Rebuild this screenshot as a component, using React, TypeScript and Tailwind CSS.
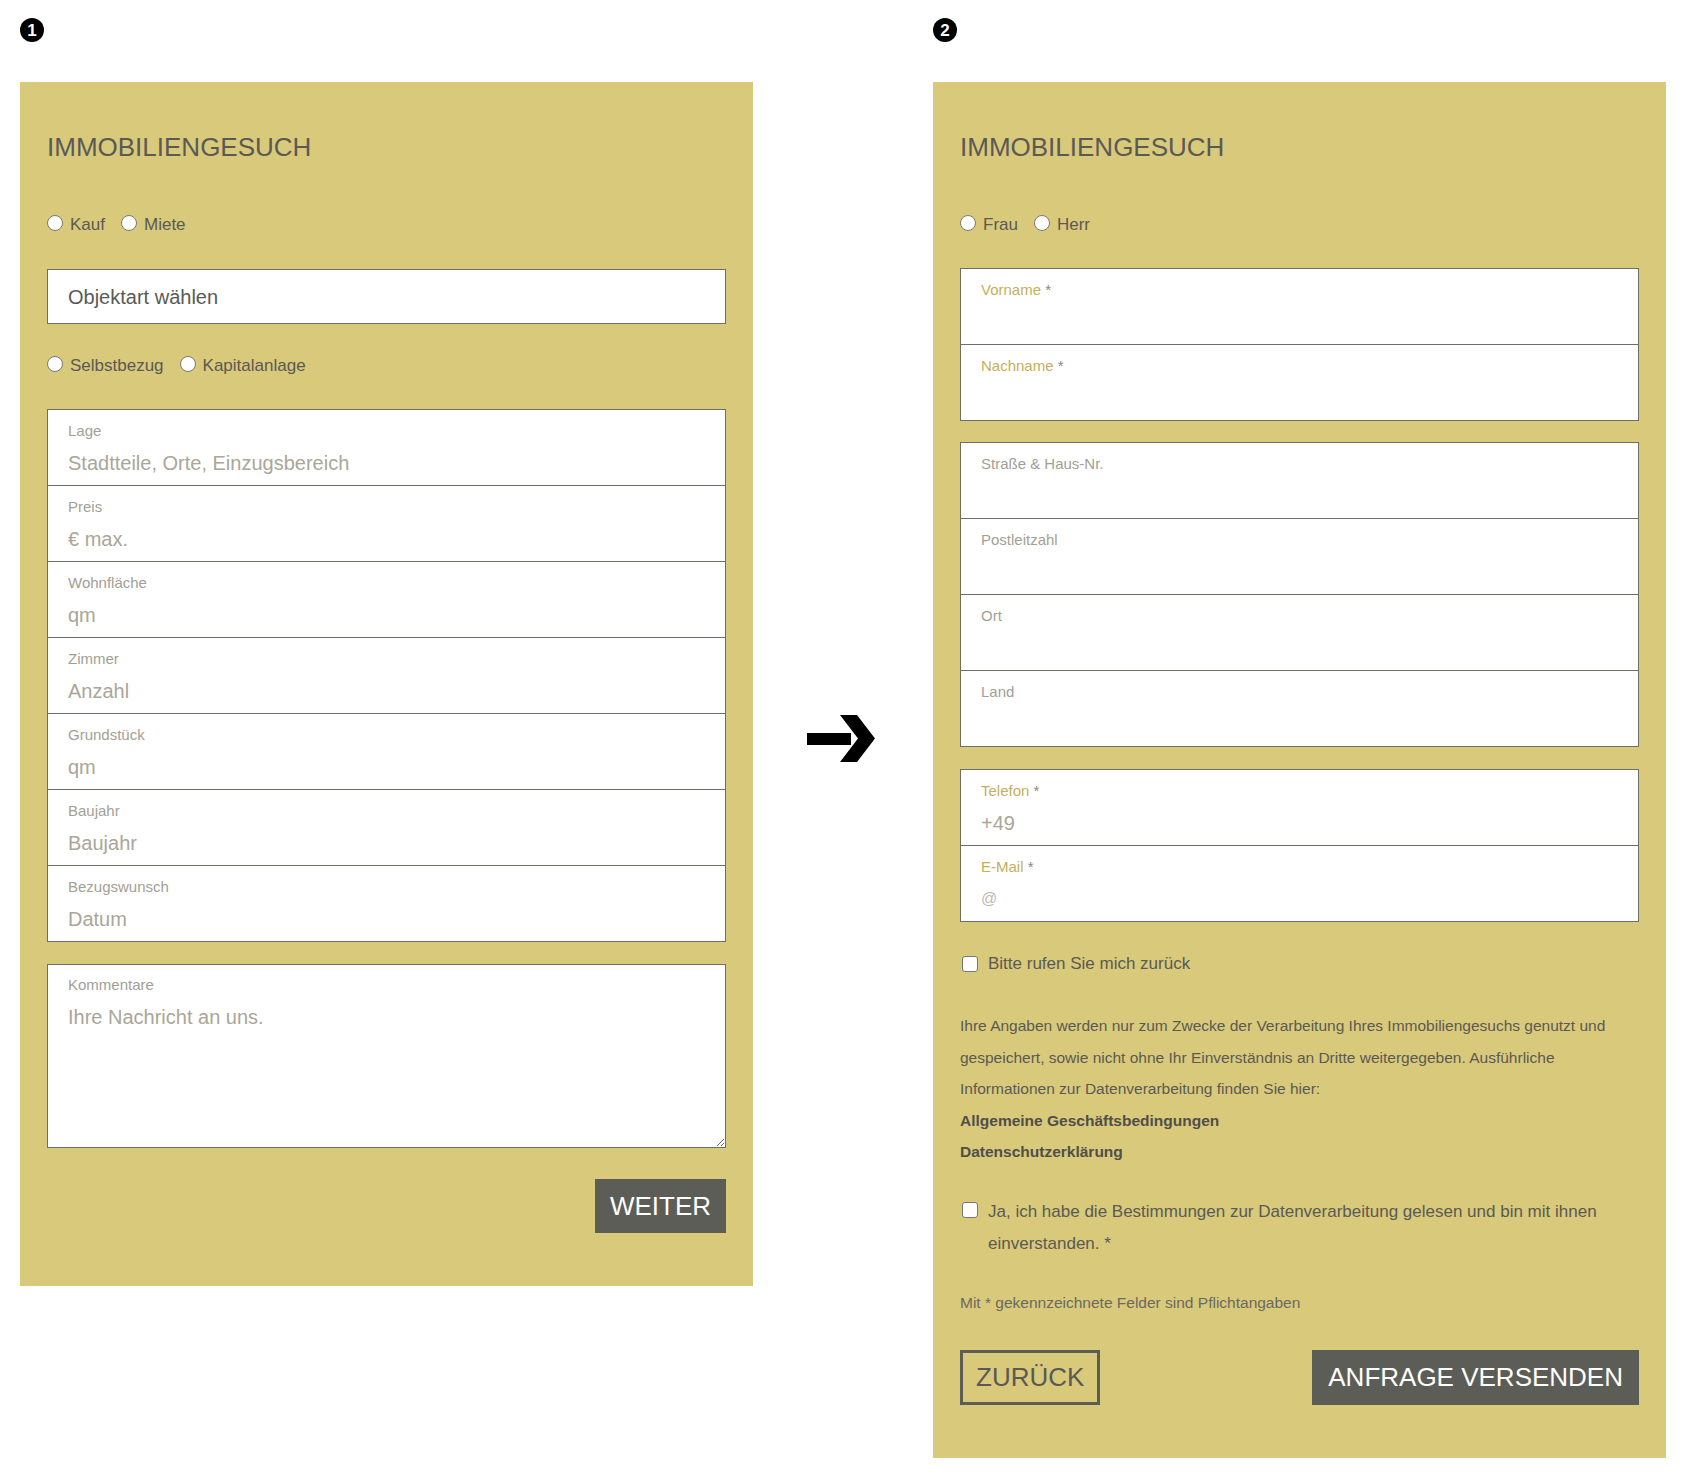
import React from 'react';

const font = "font-['Liberation_Sans',Arial,sans-serif]";

type FieldProps = {
  label: string;
  required?: boolean;
  placeholder?: string;
  small?: boolean;
};

function Field({ label, required, placeholder, small }: FieldProps) {
  return (
    <div className="px-5 pt-[11px] pb-[9px] border-t border-[#6e6e69] first:border-t-0">
      <label className={`block text-[15px] leading-[20px] ${required ? 'text-[#c4b05a]' : 'text-[#a29f95]'}`}>
        {label}
        {required && <span className="text-[#8a8780]"> *</span>}
      </label>
      <input
        type="text"
        placeholder={placeholder}
        className={`block w-full h-[26px] mt-[9px] bg-transparent outline-none text-[#5a5a55] ${
          small ? 'text-[16px] placeholder:text-[#bdbab1]' : 'text-[20px] placeholder:text-[#aaa698]'
        }`}
      />
    </div>
  );
}

function Group({ children }: { children: React.ReactNode }) {
  return <div className="bg-white border border-[#6e6e69]">{children}</div>;
}

function Radio({ label }: { label: string }) {
  return (
    <label className="flex items-center gap-[7px]">
      <span className="w-[16px] h-[16px] rounded-full border border-[#7a7a76] bg-white" />
      <span className="text-[17px] leading-[24px] pt-[3px] text-[#5a5a55]">{label}</span>
    </label>
  );
}

function Checkbox() {
  return <span className="block shrink-0 w-[16px] h-[16px] rounded-[3px] border border-[#767672] bg-white" />;
}

function Marker({ n }: { n: number }) {
  return (
    <div className="h-[64px]">
      <div className="w-[24px] h-[24px] rounded-full bg-black text-white flex items-center justify-center text-[17px] font-bold leading-none">
        {n}
      </div>
    </div>
  );
}

function Heading() {
  return <h2 className="text-[26px] leading-[31px] text-[#5a5a55]">IMMOBILIENGESUCH</h2>;
}

function StepOne() {
  return (
    <div className="bg-[#d9c97b] px-[27px] pt-[50px] pb-[53px]">
      <Heading />
      <div className="flex gap-[16px] h-6 items-center mt-[48px]">
        <Radio label="Kauf" />
        <Radio label="Miete" />
      </div>
      <div className="mt-[34px] h-[55px] bg-white border border-[#6e6e69] flex items-center px-5">
        <select className="appearance-none w-full bg-transparent outline-none text-[20px] text-[#5a5a55]">
          <option>Objektart wählen</option>
        </select>
      </div>
      <div className="flex gap-[16px] h-6 items-center mt-[28px]">
        <Radio label="Selbstbezug" />
        <Radio label="Kapitalanlage" />
      </div>
      <div className="mt-[33px]">
        <Group>
          <Field label="Lage" placeholder="Stadtteile, Orte, Einzugsbereich" />
          <Field label="Preis" placeholder="€ max." />
          <Field label="Wohnfläche" placeholder="qm" />
          <Field label="Zimmer" placeholder="Anzahl" />
          <Field label="Grundstück" placeholder="qm" />
          <Field label="Baujahr" placeholder="Baujahr" />
          <Field label="Bezugswunsch" placeholder="Datum" />
        </Group>
      </div>
      <div className="mt-[22px] h-[184px] bg-white border border-[#6e6e69] pl-5 pt-[10px] flex flex-col">
        <label className="block text-[15px] leading-[20px] text-[#a29f95]">Kommentare</label>
        <textarea
          placeholder="Ihre Nachricht an uns."
          className="block flex-1 w-full mt-[9px] bg-transparent outline-none resize text-[20px] leading-[26px] text-[#5a5a55] placeholder:text-[#aaa698]"
        />
      </div>
      <div className="flex justify-end mt-[31px]">
        <button className="h-[54px] px-[15px] bg-[#5d5d58] text-white text-[26px] leading-none">WEITER</button>
      </div>
    </div>
  );
}

function StepTwo() {
  return (
    <div className="bg-[#d9c97b] px-[27px] pt-[50px] pb-[53px]">
      <Heading />
      <div className="flex gap-[16px] h-6 items-center mt-[48px]">
        <Radio label="Frau" />
        <Radio label="Herr" />
      </div>
      <div className="mt-[33px]">
        <Group>
          <Field label="Vorname" required />
          <Field label="Nachname" required />
        </Group>
      </div>
      <div className="mt-[21px]">
        <Group>
          <Field label="Straße & Haus-Nr." />
          <Field label="Postleitzahl" />
          <Field label="Ort" />
          <Field label="Land" />
        </Group>
      </div>
      <div className="mt-[22px]">
        <Group>
          <Field label="Telefon" required placeholder="+49" />
          <Field label="E-Mail" required placeholder="@" small />
        </Group>
      </div>
      <label className="flex items-center gap-[10px] h-6 mt-[30px] pl-[2px]">
        <Checkbox />
        <span className="text-[17px] text-[#5a5a55]">Bitte rufen Sie mich zurück</span>
      </label>
      <div className="mt-[34px] text-[15.5px] leading-[31.5px] text-[#5a5a55]">
        <p>
          Ihre Angaben werden nur zum Zwecke der Verarbeitung Ihres Immobiliengesuchs genutzt und gespeichert, sowie
          nicht ohne Ihr Einverständnis an Dritte weitergegeben. Ausführliche Informationen zur Datenverarbeitung finden
          Sie hier:
        </p>
        <a className="block font-bold text-[#4f4f4a] text-[15.5px]">Allgemeine Geschäftsbedingungen</a>
        <a className="block font-bold text-[#4f4f4a] text-[15.5px]">Datenschutzerklärung</a>
      </div>
      <label className="flex gap-[10px] mt-[28px] pl-[2px]">
        <span className="block shrink-0 pt-[6px]">
          <Checkbox />
        </span>
        <span className="text-[17px] leading-[32px] text-[#5a5a55]">
          Ja, ich habe die Bestimmungen zur Datenverarbeitung gelesen und bin mit ihnen einverstanden. *
        </span>
      </label>
      <p className="mt-[31px] text-[15.5px] leading-[24px] text-[#6a6962]">Mit * gekennzeichnete Felder sind Pflichtangaben</p>
      <div className="flex justify-between mt-[35px]">
        <button className="h-[55px] px-[13px] border-[3px] border-[#5d5d58] text-[#5a5a55] text-[26px] leading-none">
          ZURÜCK
        </button>
        <button className="h-[55px] px-[16px] bg-[#5d5d58] text-white text-[26px] leading-none">ANFRAGE VERSENDEN</button>
      </div>
    </div>
  );
}

function Arrow() {
  return (
    <svg width="68" height="47" viewBox="0 0 68 47" aria-hidden="true">
      <rect x="0" y="18" width="44" height="12" fill="#000" />
      <polygon points="33,0 50,0 68,23.5 50,47 33,47 51,23.5" fill="#000" />
    </svg>
  );
}

export default function App() {
  return (
    <div className={`min-h-screen bg-white ${font}`}>
      <div className="flex px-[20px] pt-[18px] pb-[22px]">
        <div className="w-[733px] shrink-0">
          <Marker n={1} />
          <StepOne />
        </div>
        <div className="flex-1 flex justify-center pt-[697px] pr-[4px]">
          <Arrow />
        </div>
        <div className="w-[733px] shrink-0">
          <Marker n={2} />
          <StepTwo />
        </div>
      </div>
    </div>
  );
}
